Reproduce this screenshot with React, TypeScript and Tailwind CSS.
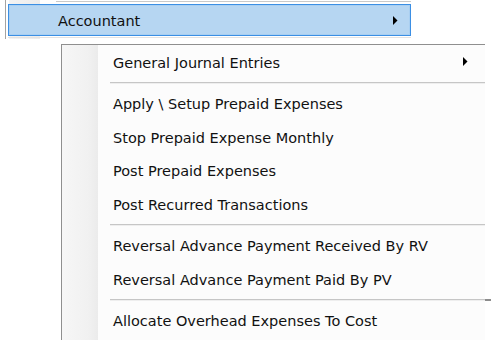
import React from 'react';

const Arrow = () => (
  <svg width="5" height="9" viewBox="0 0 5 9" className="shrink-0">
    <path d="M0 0 L4.5 4.5 L0 9 Z" fill="#000" />
  </svg>
);

type Entry = { label?: string; sub?: boolean; sep?: boolean; tail?: boolean };

const entries: Entry[] = [
  { label: 'General Journal Entries', sub: true },
  { sep: true },
  { label: 'Apply \\ Setup Prepaid Expenses' },
  { label: 'Stop Prepaid Expense Monthly' },
  { label: 'Post Prepaid Expenses' },
  { label: 'Post Recurred Transactions' },
  { sep: true },
  { label: 'Reversal Advance Payment Received By RV' },
  { label: 'Reversal Advance Payment Paid By PV' },
  { sep: true, tail: true },
  { label: 'Allocate Overhead Expenses To Cost' },
];

export default function App() {
  return (
    <div className="w-[491px] h-[340px] bg-white overflow-hidden font-['DejaVu_Sans',sans-serif] text-[14.5px] text-[#111]">
      {/* parent menu */}
      <div className="ml-[5px] w-[406px] h-[39px] border-l border-[#a3a3a3] bg-[linear-gradient(to_right,#ffffff_3px,#f3f3f3_3px,#ececec_34px,#ffffff_34px)]">
        <div className="h-[4px] flex">
          <div className="w-[50px]" />
          <div className="flex-1 h-[1px] mt-[1px] bg-[#c9c9c9]" />
        </div>
        <div className="ml-[2px] h-[32px] border border-[#3b8fe4] bg-[#b6d6f2] shadow-[inset_0_0_0_1px_#a9cff1] flex items-center pl-[49px] pr-[12px]">
          <span className="flex-1 pt-[3px]">Accountant</span>
          <Arrow />
        </div>
        <div className="ml-[2px] mt-[1px] h-[1px] bg-[#e3e3e3]" />
      </div>

      {/* submenu */}
      <div className="mt-[5px] ml-[61px] w-[424px] h-[300px] border-t border-l border-[#8f8f8f] bg-[linear-gradient(to_right,#f6f6f6_0px,#f1f1f1_26px,#ebebeb_36px,#fcfcfc_36px)]">
        {entries.map((e, i) =>
          e.sep ? (
            <div key={i} className="h-[8px] flex items-center pl-[48px]">
              <div className="flex-1 flex">
                <div className="flex-1 h-[2px] border-t border-[#c6c6c6] border-b border-b-[#eeeeee]" />
                {e.tail && <div className="w-[6px] -mr-[6px] h-[2px] bg-[#8c8c8c]" />}
              </div>
            </div>
          ) : (
            <div key={i} className="h-[33.5px] flex items-center pl-[51px] pr-[17px]">
              <span className="flex-1 whitespace-nowrap pt-[4px]">{e.label}</span>
              {e.sub && <Arrow />}
            </div>
          )
        )}
      </div>
    </div>
  );
}
